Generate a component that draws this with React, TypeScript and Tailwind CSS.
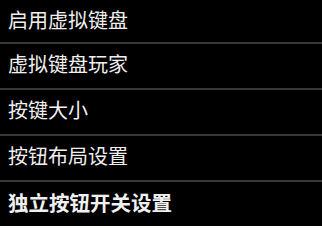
const items = [
  { label: '启用虚拟键盘', bold: false },
  { label: '虚拟键盘玩家', bold: false },
  { label: '按键大小', bold: false },
  { label: '按钮布局设置', bold: false },
  { label: '独立按钮开关设置', bold: true },
];

export default function App() {
  return (
    <div
      className="w-[322px] h-[226px] overflow-hidden bg-black text-[#f0f0f0]"
      style={{ fontFamily: '"Noto Sans CJK SC", "Noto Sans", sans-serif' }}
    >
      {items.map((item, i) => (
        <div
          key={i}
          className={`flex items-center px-[8px] border-b-2 border-[#383838] ${
            i === 0 ? 'h-[44px] pb-[3px]' : 'h-[46px] pb-[5px]'
          }`}
        >
          <span
            className={
              item.bold
                ? 'text-[20.5px] leading-[24px] font-bold'
                : 'text-[20px] leading-[24px] font-normal'
            }
          >
            {item.label}
          </span>
        </div>
      ))}
    </div>
  );
}
